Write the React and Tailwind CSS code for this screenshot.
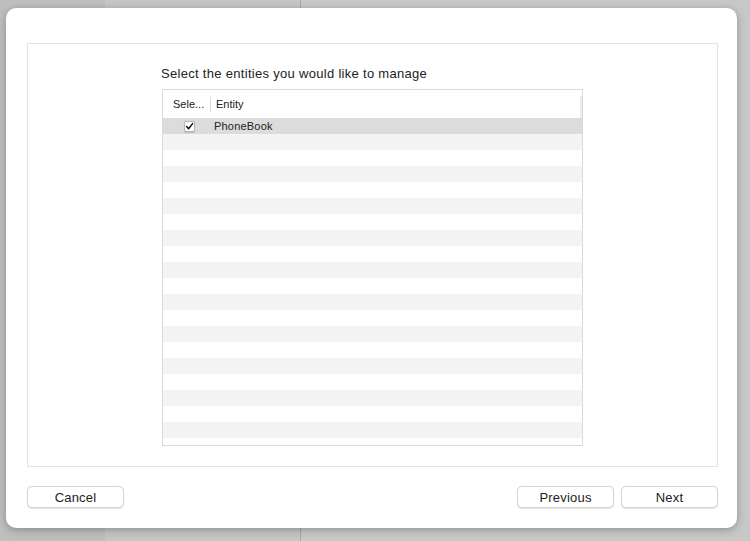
import React from "react";

const ROWS = Array.from({ length: 20 }, (_, i) => i);

const Checkbox = () => (
  <div className="w-[11px] h-[11px] rounded-[2px] bg-white border border-[#b5b5b5] flex items-center justify-center shadow-[0_0.5px_1px_rgba(0,0,0,0.15)]">
    <svg width="9" height="9" viewBox="0 0 9 9">
      <path d="M1.6 4.6 L3.6 6.8 L7.6 1.6" fill="none" stroke="#111" strokeWidth="1.5" strokeLinecap="round" strokeLinejoin="round" />
    </svg>
  </div>
);

const Button = ({ children }) => (
  <button className="w-[97px] h-[22px] rounded-[5px] bg-white border border-[#d4d4d4] shadow-[0_0.5px_1px_rgba(0,0,0,0.12)] text-[13px] text-[#222] leading-none tracking-[0.2px]">
    {children}
  </button>
);

export default function App() {
  return (
    <div
      className="relative w-[750px] h-[541px] overflow-hidden flex"
      style={{ fontFamily: '"Liberation Sans", Arial, sans-serif' }}
    >
      {/* window behind the sheet */}
      <div className="w-[105px] h-full bg-[#bfbfbf]" />
      <div className="w-[196px] h-full bg-[#c6c6c6] border-r border-[#a9a9a9]" />
      <div className="flex-1 h-full bg-[#c8c8c8]" />

      {/* sheet */}
      <div className="absolute left-[6px] top-[8px] w-[731px] h-[520px] bg-white rounded-[10px] shadow-[0_2px_8px_rgba(0,0,0,0.28)] flex flex-col pl-[21px] pr-[19px] pt-[35px]">
        <div className="h-[424px] border border-[#e3e3e3] flex flex-col items-center pt-[22px]">
          <div className="w-[421px]">
            <p className="text-[13px] leading-[16px] text-[#222] -ml-[1px] mb-[7px] tracking-[0.3px]">
              Select the entities you would like to manage
            </p>
            <div className="h-[357px] border border-[#dadada] bg-white">
              <div className="relative h-[28px] flex items-center text-[11px] text-[#222]">
                <div className="w-[47px] pl-[10px] h-full flex items-center">Sele...</div>
                <div className="w-px h-[15px] bg-[#dcdcdc]" />
                <div className="pl-[5px]">Entity</div>
                <div className="absolute right-0 top-[6px] w-[2px] h-[22px] bg-[#ececec]" />
              </div>
              {ROWS.map((i) => (
                <div
                  key={i}
                  className={`h-[16px] flex items-center text-[11px] text-[#222] ${
                    i === 0 ? "bg-[#dcdcdc]" : i % 2 === 1 ? "bg-[#f3f4f3]" : "bg-white"
                  }`}
                >
                  {i === 0 && (
                    <>
                      <div className="w-[47px] flex justify-center pl-[6px]">
                        <Checkbox />
                      </div>
                      <div className="pl-[4px] tracking-[0.2px]">PhoneBook</div>
                    </>
                  )}
                </div>
              ))}
            </div>
          </div>
        </div>

        <div className="flex items-center justify-between mt-[19px]">
          <Button>Cancel</Button>
          <div className="flex gap-[7px]">
            <Button>Previous</Button>
            <Button>Next</Button>
          </div>
        </div>
      </div>
    </div>
  );
}
